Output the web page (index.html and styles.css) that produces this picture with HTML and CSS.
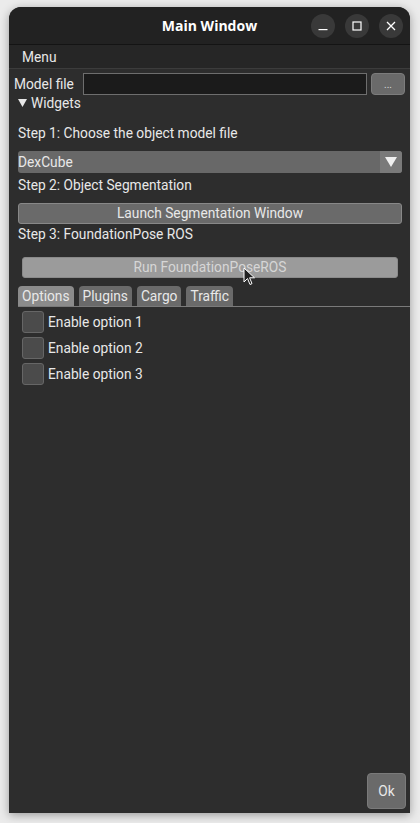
FILE: index.html
```html
<!DOCTYPE html>
<html>
<head>
<meta charset="utf-8">
<link rel="stylesheet" href="styles.css">
</head>
<body>
<div class="window">
  <div class="titlebar">
    <div class="title">Main Window</div>
    <div class="wbtns">
      <div class="wbtn"><svg width="12" height="12" viewBox="0 0 12 12"><rect x="1.5" y="9" width="9" height="1.2" fill="#fff"/></svg></div>
      <div class="wbtn"><svg width="12" height="12" viewBox="0 0 12 12"><rect x="2" y="2" width="8" height="8" fill="none" stroke="#fff" stroke-width="1.2"/></svg></div>
      <div class="wbtn"><svg width="12" height="12" viewBox="0 0 12 12"><path d="M2 2L10 10M10 2L2 10" stroke="#fff" stroke-width="1.3"/></svg></div>
    </div>
  </div>
  <div class="menubar"><span class="menu">Menu</span></div>
  <div class="content">
    <div class="modelrow">
      <span class="label">Model file</span>
      <div class="input"></div>
      <div class="dots">...</div>
    </div>
    <div class="tree"><svg class="tri" width="9" height="8" viewBox="0 0 9 8"><path d="M0 0H9L4.5 8Z" fill="#e6e6e6"/></svg>Widgets</div>
    <div class="step s1">Step 1: Choose the object model file</div>
    <div class="combo"><span class="cval">DexCube</span><span class="carrow"><svg width="14" height="12" viewBox="0 0 14 12"><path d="M1 1H13L7 11Z" fill="#f0f0f0"/></svg></span></div>
    <div class="step s2">Step 2: Object Segmentation</div>
    <div class="btn launch">Launch Segmentation Window</div>
    <div class="step s3">Step 3: FoundationPose ROS</div>
    <div class="btn run">Run FoundationPoseROS</div>
    <div class="tabs">
      <div class="tab active">Options</div>
      <div class="tab">Plugins</div>
      <div class="tab">Cargo</div>
      <div class="tab">Traffic</div>
    </div>
    <div class="checks">
      <div class="check"><span class="box"></span>Enable option 1</div>
      <div class="check"><span class="box"></span>Enable option 2</div>
      <div class="check"><span class="box"></span>Enable option 3</div>
    </div>
    <div class="spacer"></div>
    <div class="okrow"><div class="ok">Ok</div></div>
  </div>
  <svg class="cursor" width="14" height="20" viewBox="0 0 14 20"><path d="M1 1L1 15L4.5 11.5L7 17.5L9 16.6L6.6 10.8L11.5 10.8Z" fill="#222" stroke="#fff" stroke-width="1"/></svg>
</div>
</body>
</html>
```
FILE: styles.css
```css
* { box-sizing: border-box; }
html, body { margin: 0; padding: 0; }
body {
  background: #ebebeb;
  width: 420px;
  height: 823px;
  overflow: hidden;
  font-family: Roboto, "Noto Sans", sans-serif;
  font-size: 13.75px;
  font-weight: 400;
  color: #e8e8e8;
}
.window {
  position: relative;
  margin: 7px 0 0 9px;
  width: 401px;
  height: 806px;
  background: #2d2d2d;
  border-radius: 12px 12px 0 0;
  box-shadow: 0 2px 10px rgba(0,0,0,0.35);
  display: flex;
  flex-direction: column;
  overflow: hidden;
}
.titlebar {
  height: 38px;
  background: #222222;
  border-bottom: 1px solid #141414;
  position: relative;
  display: flex;
  align-items: center;
  justify-content: center;
  flex: none;
}
.title {
  font-family: "Open Sans", Roboto, sans-serif;
  font-weight: 700;
  font-size: 14px;
  color: #ffffff;
}
.wbtns {
  position: absolute;
  right: 7px;
  top: 7px;
  display: flex;
  gap: 10px;
}
.wbtn {
  width: 24px;
  height: 24px;
  border-radius: 50%;
  background: #393939;
  display: flex;
  align-items: center;
  justify-content: center;
}
.menubar {
  height: 24px;
  background: #262626;
  border-bottom: 1px solid #3c3c3c;
  display: flex;
  align-items: center;
  padding-left: 13px;
  flex: none;
}
.menu { color: #e8e8e8; }
.content {
  flex: 1;
  display: flex;
  flex-direction: column;
  padding: 4px 0 0 0;
}
.modelrow {
  display: flex;
  align-items: center;
  padding-left: 5px;
  height: 22px;
}
.label { width: 69px; }
.input {
  width: 284px;
  height: 22px;
  background: #1b1b1b;
  border: 1px solid #6e6e6e;
}
.dots {
  margin-left: 4px;
  width: 34px;
  height: 22px;
  background: #6a6a6a;
  border: 1px solid #7c7c7c;
  border-radius: 4px;
  font-size: 10px;
  line-height: 22px;
  text-align: center;
  color: #dcdcdc;
}
.tree {
  margin: -1px 0 0 9px;
  height: 18px;
  line-height: 18px;
  display: flex;
  align-items: center;
}
.tri { margin: 0 4px 0 0; }
.step {
  margin-left: 9px;
  height: 18px;
  line-height: 18px;
}
.s1 { margin-top: 12px; }
.combo {
  margin: 9px 0 0 9px;
  width: 384px;
  height: 22px;
  background: #686868;
  border-radius: 3px;
  display: flex;
  overflow: hidden;
}
.cval { flex: 1; line-height: 22px; }
.carrow {
  width: 22px;
  background: #7a7a7a;
  display: flex;
  align-items: center;
  justify-content: center;
}
.s2 { margin-top: 3px; }
.btn {
  height: 21px;
  line-height: 19px;
  text-align: center;
  border-radius: 3px;
}
.launch {
  margin: 9px 0 0 9px;
  width: 384px;
  background: #6a6a6a;
  border: 1px solid #888;
}
.s3 { margin-top: 1px; }
.run {
  margin: 14px 0 0 13px;
  width: 376px;
  background: #9b9b9b;
  border: 1px solid #8a8a8a;
  color: #d6d6d6;
}
.tabs {
  margin: 8px 0 0 9px;
  display: flex;
  gap: 5px;
  border-bottom: 1px solid #7a7a7a;
  height: 21px;
}
.tab {
  padding: 0 4px;
  height: 20px;
  line-height: 21px;
  background: #6a6a6a;
  border-radius: 4px 4px 0 0;
}
.tab.active { background: #8b8b8b; }
.checks {
  margin: 4px 0 0 13px;
  display: flex;
  flex-direction: column;
  gap: 4px;
}
.check {
  display: flex;
  align-items: center;
  height: 22px;
}
.box {
  width: 22px;
  height: 22px;
  background: #4b4b4b;
  border: 1px solid #666;
  border-radius: 3px;
  margin-right: 4px;
}
.spacer { flex: 1; }
.okrow {
  display: flex;
  justify-content: flex-end;
  padding: 0 4px 4px 0;
}
.ok {
  width: 39px;
  height: 36px;
  background: #6a6a6a;
  border: 1px solid #7a7a7a;
  border-radius: 4px;
  text-align: center;
  line-height: 34px;
}
.cursor {
  position: absolute;
  left: 234px;
  top: 260px;
}
```
